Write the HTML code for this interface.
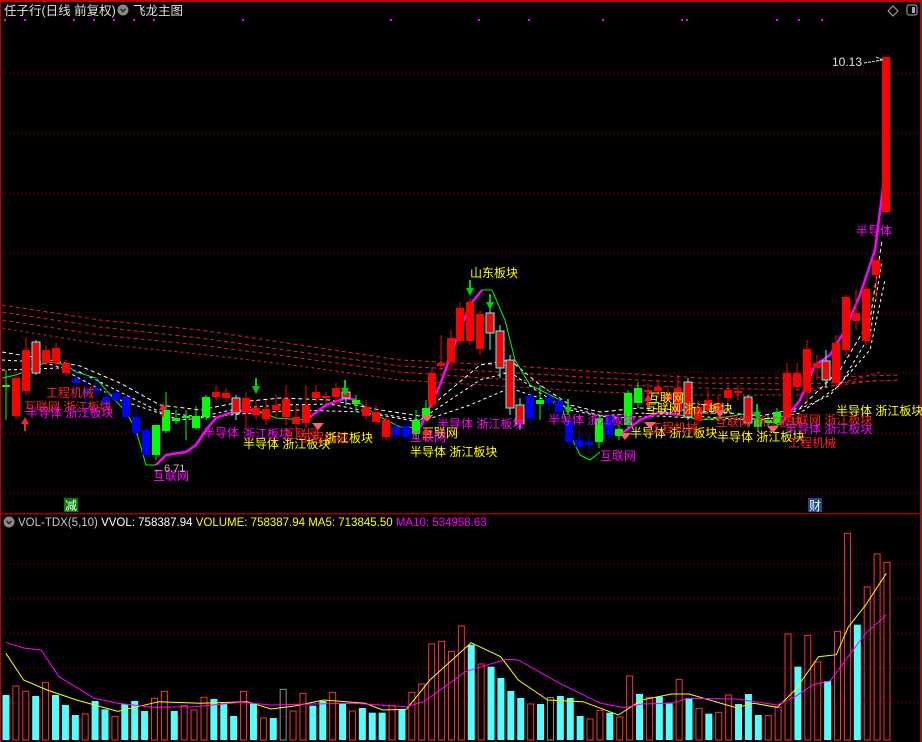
<!DOCTYPE html>
<html><head><meta charset="utf-8">
<style>
html,body{margin:0;padding:0;background:#000;}
body{width:922px;height:742px;overflow:hidden;position:relative;font-family:"Liberation Sans","WenQuanYi Zen Hei","Noto Sans CJK SC",sans-serif;}
svg{position:absolute;left:0;top:0;}
svg text{font-family:"Liberation Sans","WenQuanYi Zen Hei","Noto Sans CJK SC",sans-serif;}
</style></head>
<body>
<svg id="s" width="922" height="742" viewBox="0 0 922 742" xmlns="http://www.w3.org/2000/svg">
<rect x="0" y="0" width="922" height="742" fill="#000"/>
<rect x="0" y="0" width="922" height="2" fill="#c00000"/>
<rect x="920" y="0" width="2" height="742" fill="#c00000"/>
<rect x="0" y="0" width="1" height="742" fill="#c00000"/>
<g stroke="#a00000" stroke-width="1" stroke-dasharray="1,3">
<line x1="2" y1="73" x2="920" y2="73"/><line x1="2" y1="133" x2="920" y2="133"/>
<line x1="2" y1="193" x2="920" y2="193"/><line x1="2" y1="253" x2="920" y2="253"/>
<line x1="2" y1="313" x2="920" y2="313"/><line x1="2" y1="373" x2="920" y2="373"/>
<line x1="2" y1="433" x2="920" y2="433"/><line x1="2" y1="493" x2="920" y2="493"/>
<line x1="2" y1="564" x2="920" y2="564"/><line x1="2" y1="599" x2="920" y2="599"/>
<line x1="2" y1="633" x2="920" y2="633"/><line x1="2" y1="668" x2="920" y2="668"/>
<line x1="2" y1="703" x2="920" y2="703"/>
</g>
<rect x="0" y="513" width="922" height="1.5" fill="#a00000"/>
<g id="dots" fill="#ff00ff"></g>
<g id="ma" fill="none"></g>
<g id="cd"></g>
<g id="vol"></g>
<g id="lab"></g>
<text x="4" y="15" fill="#e0e0e0" font-size="12.5">任子行(日线 前复权)</text>
<circle cx="123" cy="10" r="5.5" fill="#888"/>
<path d="M120.5 9 L123 11.5 L125.5 9" stroke="#222" stroke-width="1.4" fill="none"/>
<text x="133" y="15" fill="#e0e0e0" font-size="12.5">飞龙主图</text>
<path d="M893 6 L898 11 L893 16 L888 11Z" stroke="#aaa" fill="none"/>
<rect x="907" y="5" width="10" height="10" rx="2" stroke="#aaa" fill="none"/>
<rect x="912" y="7" width="3" height="6" fill="#aaa"/>
<text x="832" y="66" fill="#e0e0e0" font-size="12">10.13</text>
<path d="M864 63 L882 60 M876 57 L883 60 L877 61" stroke="#e0e0e0" fill="none" stroke-dasharray="3,1"/>
<text x="153" y="472" fill="#c0c0c0" font-size="11">←6.71</text>
<rect x="64" y="498" width="14" height="14" fill="#008000"/>
<text x="65" y="510" fill="#fff" font-size="12">减</text>
<rect x="808" y="498" width="14" height="14" fill="#1a4a8a"/>
<text x="809" y="510" fill="#fff" font-size="12">财</text>
<circle cx="9" cy="522" r="5.5" fill="#888"/>
<path d="M6.5 521 L9 523.5 L11.5 521" stroke="#222" stroke-width="1.4" fill="none"/>
<text x="18" y="526" font-size="11.5" fill="#c8c8c8">VOL-TDX(5,10)  <tspan fill="#fff">VVOL: 758387.94</tspan>  <tspan fill="#ffff00">VOLUME: 758387.94  MA5: 713845.50</tspan>  <tspan fill="#ff00ff">MA10: 534958.63</tspan></text>
</svg>
<script>
var NS="http://www.w3.org/2000/svg";
function el(p,t,a,txt){var e=document.createElementNS(NS,t);for(var k in a)e.setAttribute(k,a[k]);if(txt)e.textContent=txt;document.getElementById(p).appendChild(e);return e;}
[5,25,74,94,114,134,154,243,391,479,529,603,682,687,777,799,822].forEach(function(x){el("dots","rect",{x:x-1,y:19,width:2,height:2});});
var C=[[6,385,387,"g",370,420],[16,378,416,"r",370,420],[26,350,391,"r",337,395],[36,342,373,"c",340,375],[46,350,363,"r",345,365],[56,348,363,"r",343,370],[66,363,373,"r",360,376],[76,379,383,"b",368,400],[86,390,393,"b",373,417],[96,388,391,"b",378,400],[106,397,405,"b",390,410],[116,393,400,"b",388,405],[126,397,417,"b",395,420],[136,417,433,"b",410,440],[146,430,455,"b",428,458],[156,425,455,"g",425,460],[166,410,431,"g",392,433],[176,418,421,"g",410,424],[186,416,418,"g",410,440],[196,416,428,"g",406,430],[206,397,417,"g",395,420],[216,392,397,"r",385,400],[226,393,398,"r",388,402],[236,398,413,"c",395,420],[246,398,413,"r",392,430],[256,408,415,"r",400,420],[266,409,419,"r",400,425],[276,405,410,"r",395,418],[286,399,417,"r",385,425],[296,417,424,"r",405,430],[306,405,423,"r",385,428],[316,392,398,"r",385,402],[326,396,398,"r",392,404],[336,388,397,"r",383,405],[346,392,398,"c",388,405],[356,400,404,"g",395,412],[366,407,416,"r",400,420],[376,412,422,"r",405,425],[386,420,437,"r",415,440],[396,427,435,"b",420,440],[406,426,437,"b",420,440],[416,420,434,"g",410,440],[426,408,418,"g",400,420],[432,373,405,"r",367,408],[441,363,366,"r",335,370],[451,338,362,"r",330,368],[460,308,341,"r",302,345],[470,302,341,"r",298,345],[480,314,349,"r",310,355],[490,313,333,"c",306,350],[500,331,368,"c",325,378],[510,360,408,"c",355,415],[520,405,424,"c",398,430],[530,396,418,"b",392,425],[540,400,404,"g",385,420],[549,397,403,"b",390,410],[559,401,412,"b",398,420],[569,422,442,"b",415,448],[579,440,447,"b",430,450],[589,442,445,"b",435,450],[599,418,442,"g",415,448],[609,417,435,"b",415,440],[619,429,436,"g",425,440],[628,393,425,"g",390,428],[638,388,403,"g",382,408],[648,390,392,"r",383,395],[658,387,391,"r",380,398],[668,395,400,"r",385,405],[678,388,412,"r",375,418],[688,382,417,"c",378,420],[698,407,420,"r",400,425],[708,400,410,"r",390,415],[718,403,412,"r",395,420],[728,390,398,"r",385,410],[738,391,393,"r",385,400],[748,397,423,"c",395,426],[758,420,427,"g",410,432],[768,420,423,"g",415,427],[777,412,423,"g",408,428],[787,373,417,"r",363,418],[797,373,387,"r",363,390],[807,349,392,"r",340,405],[817,363,368,"r",355,380],[826,361,380,"c",350,388],[836,343,383,"r",335,388],[846,297,350,"r",295,355],[856,313,321,"r",290,330],[866,289,341,"r",285,345],[876,260,275,"r",255,300],[886,57,212,"r",57,212]];
var col={r:"#ff0000",c:"#ff0000",b:"#0000ff",g:"#00ff00"};
C.forEach(function(c){var x=c[0];
 el("cd","line",{x1:x,y1:c[4],x2:x,y2:c[5],stroke:c[3]=="c"?"#54ffff":col[c[3]],"stroke-width":1});
 var h=Math.max(2,c[2]-c[1]);
 el("cd","rect",{x:x-4,y:c[1],width:8,height:h,fill:col[c[3]],stroke:c[3]=="c"?"#54ffff":"none","stroke-width":1});});
function pl(pts,st,w,da){el("ma","polyline",{points:pts,stroke:st,"stroke-width":w,"stroke-dasharray":da||"none",fill:"none"});}
pl("2,305 100,320 200,330 300,345 400,360 500,365 600,372 700,378 800,378 900,375","#e02020",1,"4,3");
pl("2,312 100,327 200,338 300,352 400,366 500,372 600,378 700,383 800,384 900,380","#e02020",1,"4,3");
pl("2,320 100,335 200,345 300,358 400,372 500,379 600,384 700,388 800,390 880,380","#e02020",1,"4,3");
pl("2,328 100,344 200,354 300,366 400,380 500,386 600,392 700,395 800,395 880,372","#e02020",1,"3,3");
pl("2,352 40,358 80,366 120,383 160,405 200,410 240,402 280,398 330,400 380,410 420,416 450,390 480,365 510,360 540,385 570,405 600,412 640,408 680,410 720,412 760,416 800,408 840,370 870,320 882,240","#ffffff",1,"4,3");
pl("2,360 40,362 80,372 120,392 160,412 200,417 240,408 280,405 330,404 380,414 420,420 450,400 480,380 510,372 540,393 570,410 600,416 640,413 680,415 720,418 760,420 800,413 840,385 870,335 882,260","#ffffff",1,"3,3");
pl("2,370 60,368 120,400 180,420 240,414 300,410 360,412 420,422 470,405 510,388 560,405 610,418 660,416 720,420 780,418 830,395 870,350 885,280","#ffffff",1,"3,3");
pl("2,378 16,375 36,367 46,362 56,363 66,365 76,372 96,378 106,390 126,412 136,430 146,465 156,465","#00ff00",1);
pl("156,465 166,455 186,452 196,445 206,430 216,418 236,411 256,410","#ff00ff",2.5);
pl("256,410 276,418 306,420","#00ff00",1);
pl("306,420 326,405 346,398 356,400","#ff00ff",2.5);
pl("356,400 376,415 400,427 420,428","#00ff00",1);
pl("420,428 440,385 460,330 470,305 482,290","#ff00ff",2.5);
pl("482,290 492,290 505,320 515,360 530,385 560,400 570,435 580,455 590,460 600,452","#00ff00",1);
pl("618,436 640,420 660,412 680,415","#ff00ff",2.5);
pl("680,415 700,420 720,418 750,413 760,418 780,425","#00ff00",1);
pl("780,425 800,400 815,365 830,355 845,330 860,295 875,250 884,180","#ff00ff",2.5);
var V=[[525,"c"],[498,"r"],[514,"r"],[528,"c"],[487,"r"],[525,"c"],[555,"c"],[585,"c"],[582,"r"],[543,"c"],[568,"c"],[589,"r"],[552,"c"],[543,"c"],[573,"c"],[535,"r"],[514,"r"],[573,"c"],[557,"r"],[570,"r"],[532,"r"],[537,"c"],[550,"c"],[588,"c"],[514,"r"],[550,"c"],[594,"r"],[594,"c"],[508,"g"],[573,"r"],[520,"r"],[557,"c"],[543,"c"],[517,"r"],[550,"c"],[573,"r"],[564,"c"],[578,"c"],[578,"c"],[557,"r"],[568,"c"],[517,"r"],[492,"r"],[372,"r"],[364,"r"],[394,"r"],[318,"r"],[374,"c"],[432,"r"],[440,"c"],[474,"c"],[513,"c"],[534,"c"],[552,"r"],[552,"c"],[533,"g"],[528,"c"],[534,"c"],[588,"c"],[597,"r"],[571,"r"],[578,"c"],[591,"r"],[468,"r"],[522,"c"],[532,"r"],[530,"c"],[548,"c"],[478,"r"],[534,"c"],[565,"r"],[581,"c"],[577,"r"],[525,"r"],[552,"c"],[522,"c"],[585,"c"],[587,"r"],[562,"r"],[342,"r"],[440,"c"],[346,"r"],[426,"r"],[483,"c"],[334,"r"],[40,"r"],[314,"c"],[201,"r"],[102,"r"],[127,"r"]];
var P=(887-6)/(V.length-1);
V.forEach(function(v,i){var x=6+P*i;var y=520+v[0]/3;var h=740-y;
 if(v[1]=="c")el("vol","rect",{x:x-3.5,y:y,width:7,height:h,fill:"#54ffff"});
 else el("vol","rect",{x:x-3,y:y,width:6,height:h,fill:"none",stroke:v[1]=="r"?"#ff3232":"#909090","stroke-width":1});});
function vl(pts,st){var p=pts.map(function(q){return (q[0]/1.698).toFixed(1)+","+(520+q[1]/3).toFixed(1)}).join(" ");el("vol","polyline",{points:p,stroke:st,fill:"none","stroke-width":1});}
vl([[10,400],[40,480],[80,510],[130,540],[200,574],[270,545],[340,550],[420,545],[460,567],[500,558],[550,540],[620,550],[650,570],[690,568],[730,480],[800,368],[850,410],[880,480],[930,540],[990,545],[1050,585],[1090,540],[1140,522],[1170,522],[1250,563],[1280,550],[1320,562],[1350,510],[1390,410],[1420,404],[1440,322],[1470,255],[1505,160]],"#ffff00");
vl([[10,367],[40,384],[70,390],[100,470],[160,535],[200,550],[260,562],[330,560],[410,547],[460,555],[530,552],[600,550],[690,560],[720,545],[790,455],[860,418],[880,420],[950,490],[1020,550],[1060,563],[1090,552],[1140,550],[1170,535],[1250,537],[1320,555],[1350,530],[1380,495],[1410,482],[1440,410],[1470,340],[1505,285]],"#ff00ff");
var L=[[46,397,"工程机械","#ff2020"],[24,411,"互联网 浙江板块","#ff2020"],[26,417,"半导体 浙江板块","#ff00ff"],[153,480,"互联网","#ff00ff"],[203,437,"半导体","#ff00ff"],[243,438,"浙江板块","#ff00ff"],[243,448,"半导体 浙江板块","#ffff00"],[283,438,"互联网","#ff2020"],[300,442,"工程机械","#ff2020"],[325,442,"浙江板块","#ffff00"],[470,277,"山东板块","#ffff00"],[422,437,"互联网","#ffff00"],[410,441,"互联网","#ff00ff"],[410,456,"半导体 浙江板块","#ffff00"],[437,428,"半导体 浙江板块","#ff00ff"],[548,424,"半导体 浙江板块","#ff00ff"],[600,460,"互联网","#ff00ff"],[645,413,"互联网 浙江板块","#ffff00"],[648,402,"互联网","#ffff00"],[630,437,"半导体 浙江板块","#ffff00"],[650,432,"工程机械","#ff2020"],[715,426,"互联网 浙江板块","#ff2020"],[717,441,"半导体 浙江板块","#ffff00"],[785,424,"互联网 浙江板块","#ff2020"],[785,433,"半导体 浙江板块","#ff00ff"],[788,447,"工程机械","#ff2020"],[836,415,"半导体 浙江板块","#ffff00"],[856,235,"半导体","#ff00ff"]];
L.forEach(function(l){el("lab","text",{x:l[0],y:l[1],fill:l[3],"font-size":12},l[2]);});
[[318,423],[427,415],[625,433],[650,422],[720,410],[773,426]].forEach(function(d){el("lab","path",{d:"M"+(d[0]-6)+" "+d[1]+" l12 0 l-6 7z",fill:"#ff6060"});});
[[470,288],[490,302],[256,386],[345,388],[568,407],[757,412]].forEach(function(a){el("lab","path",{d:"M"+(a[0]-4)+" "+a[1]+" l8 0 l-4 8z M"+(a[0]-1)+" "+(a[1]-8)+" h2 v8 h-2z",fill:"#00d000"});});
[[25,418],[163,404],[426,428],[648,395]].forEach(function(a){el("lab","path",{d:"M"+(a[0]-4)+" "+(a[1]+6)+" l4 -7 l4 7z M"+(a[0]-1)+" "+(a[1]+6)+" h2 v7 h-2z",fill:"#ff2020"});});
</script>
</body></html>
